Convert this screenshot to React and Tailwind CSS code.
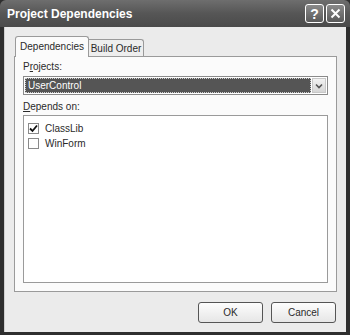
import React from "react";

const font = { fontFamily: '"Liberation Sans", Arial, sans-serif' };

const CheckRow = ({ label, checked }) => (
  <div className="flex items-center h-[15px] gap-[6px]">
    <div className="w-[11px] h-[11px] border border-[#8a8a8a] bg-white flex items-center justify-center">
      {checked && (
        <svg width="9" height="9" viewBox="0 0 9 9">
          <path d="M1 4.5 L3.5 7 L8 1.5" stroke="#111" strokeWidth="1.8" fill="none" />
        </svg>
      )}
    </div>
    <span className="text-[10px] text-[#2a2a2a] leading-none">{label}</span>
  </div>
);

export default function App() {
  return (
    <div className="w-[350px] h-[335px] bg-[#2e2e2e] flex flex-col" style={font}>
      {/* title bar */}
      <div className="h-[27px] bg-gradient-to-b from-[#6e6e6e] via-[#565656] to-[#4a4a4a] flex items-center pl-[7px] pr-[5px] rounded-t-[6px]">
        <span className="text-white font-bold text-[12px] flex-1">Project Dependencies</span>
        <div className="flex gap-[2px]">
          <div className="w-[19px] h-[19px] rounded-[3px] border border-white bg-gradient-to-b from-[#8a8a8a] to-[#5a5a5a] flex items-center justify-center text-white font-bold text-[14px] leading-none">?</div>
          <div className="w-[19px] h-[19px] rounded-[3px] border border-white bg-gradient-to-b from-[#8a8a8a] to-[#5a5a5a] flex items-center justify-center">
            <svg width="11" height="11" viewBox="0 0 11 11">
              <path d="M1.5 1.5 L9.5 9.5 M9.5 1.5 L1.5 9.5" stroke="white" strokeWidth="2" />
            </svg>
          </div>
        </div>
      </div>

      {/* body */}
      <div className="flex-1 mx-[4px] mb-[3px] bg-[#ebebeb] border-l border-[#cfcfcf] flex flex-col pt-[8px] px-[9px]">
        {/* tabs */}
        <div className="flex items-end pl-[1px] h-[21px] relative z-10">
          <div className="h-[21px] w-[74px] bg-[#fbfbfb] border border-b-0 border-[#9a9a9a] rounded-t-[3px] text-[10px] text-[#2a2a2a] flex items-center justify-center -mb-[1px] pb-[1px]">
            Dependencies
          </div>
          <div className="h-[17px] w-[55px] bg-[#eeeeee] border border-b-0 border-l-0 border-[#9a9a9a] rounded-tr-[3px] text-[10px] text-[#2a2a2a] flex items-center justify-center">
            Build Order
          </div>
        </div>
        {/* panel */}
        <div className="h-[236px] bg-[#fbfbfb] border border-[#9a9a9a] px-[8px] pt-[3px] flex flex-col">
          <div className="text-[10px] text-[#2a2a2a] leading-[13px]">
            P<span className="underline">r</span>ojects:
          </div>
          <div className="mt-[3px] h-[19px] border border-[#8a8a8a] bg-white flex p-[1px]">
            <div className="flex-1 bg-[#555555] border border-dotted border-[#cfcfcf] text-white text-[10px] flex items-center pl-[2px]">
              UserControl
            </div>
            <div className="w-[14px] ml-[1px] bg-gradient-to-b from-[#f2f2f2] to-[#d6d6d6] border border-[#c8c8c8] flex items-center justify-center">
              <svg width="8" height="6" viewBox="0 0 8 6">
                <path d="M1 1.5 L4 4.5 L7 1.5" stroke="#555" strokeWidth="1.6" fill="none" />
              </svg>
            </div>
          </div>
          <div className="mt-[5px] text-[10px] text-[#2a2a2a] leading-[13px]">
            <span className="underline">D</span>epends on:
          </div>
          <div className="mt-[2px] h-[168px] border border-[#9a9a9a] bg-white pl-[4px] pt-[5px] flex flex-col">
            <CheckRow label="ClassLib" checked />
            <CheckRow label="WinForm" />
          </div>
        </div>
        {/* buttons */}
        <div className="flex justify-end gap-[8px] mt-[10px] pr-[1px]">
          <button className="w-[65px] h-[21px] rounded-[3px] border border-[#555] bg-gradient-to-b from-[#fdfdfd] to-[#e6e6e6] text-[10px] text-[#2a2a2a]">
            OK
          </button>
          <button className="w-[65px] h-[21px] rounded-[3px] border border-[#555] bg-gradient-to-b from-[#fdfdfd] to-[#e6e6e6] text-[10px] text-[#2a2a2a]">
            Cancel
          </button>
        </div>
      </div>
    </div>
  );
}
